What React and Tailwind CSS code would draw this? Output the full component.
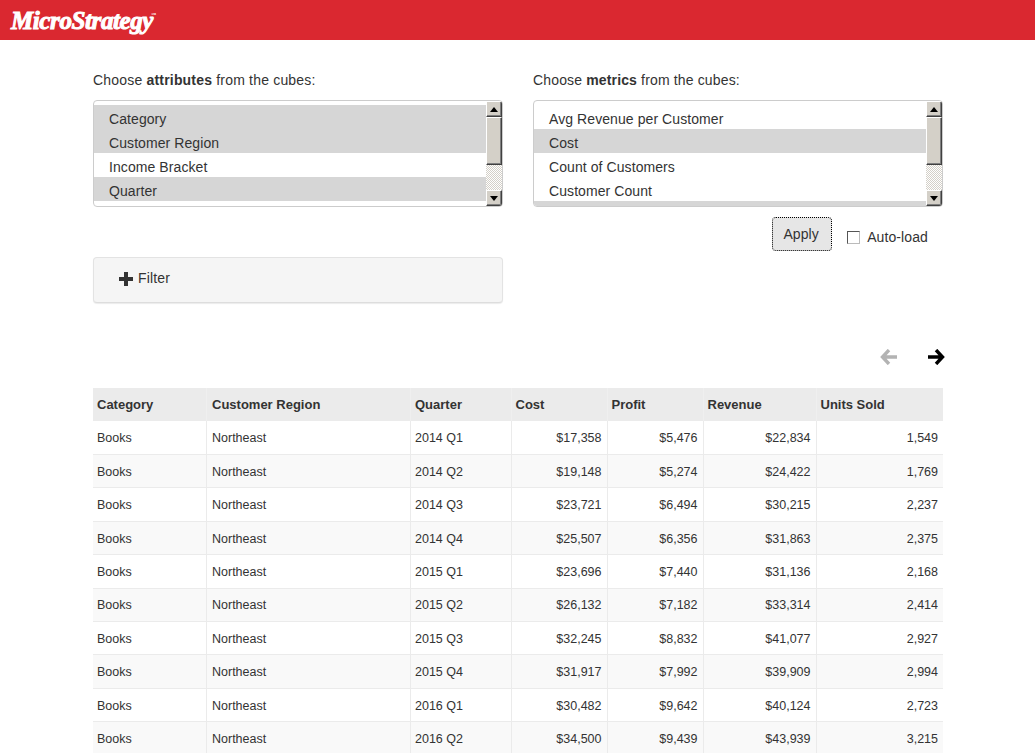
const attrs = [["Category", true], ["Customer Region", true], ["Income Bracket", false], ["Quarter", true]];
const metrics = [["Avg Revenue per Customer", false], ["Cost", true], ["Count of Customers", false], ["Customer Count", false]];
const rows = [
  ["2014 Q1", "$17,358", "$5,476", "$22,834", "1,549"],
  ["2014 Q2", "$19,148", "$5,274", "$24,422", "1,769"],
  ["2014 Q3", "$23,721", "$6,494", "$30,215", "2,237"],
  ["2014 Q4", "$25,507", "$6,356", "$31,863", "2,375"],
  ["2015 Q1", "$23,696", "$7,440", "$31,136", "2,168"],
  ["2015 Q2", "$26,132", "$7,182", "$33,314", "2,414"],
  ["2015 Q3", "$32,245", "$8,832", "$41,077", "2,927"],
  ["2015 Q4", "$31,917", "$7,992", "$39,909", "2,994"],
  ["2016 Q1", "$30,482", "$9,642", "$40,124", "2,723"],
  ["2016 Q2", "$34,500", "$9,439", "$43,939", "3,215"],
];
const headers = ["Category", "Customer Region", "Quarter", "Cost", "Profit", "Revenue", "Units Sold"];

function Bevel({ className, children }) {
  return (
    <div className={"flex items-center justify-center bg-[#d4d0c8] border border-t-white border-l-white border-r-[#404040] border-b-[#404040] shadow-[inset_-1px_-1px_0_#808080] " + className}>
      {children}
    </div>
  );
}

function Scrollbar() {
  return (
    <div className="w-[16px] h-full flex flex-col shrink-0">
      <Bevel className="h-[16px]">
        <svg width="8" height="5" viewBox="0 0 8 5"><path d="M4 0 L8 5 H0 Z" fill="#000" /></svg>
      </Bevel>
      <Bevel className="h-[48px]" />
      <div className="flex-1 bg-[repeating-conic-gradient(#d4d0c8_0_25%,#ffffff_0_50%)] bg-[length:2px_2px]" />
      <Bevel className="h-[16px]">
        <svg width="8" height="5" viewBox="0 0 8 5"><path d="M4 5 L8 0 H0 Z" fill="#000" /></svg>
      </Bevel>
    </div>
  );
}

function ListBox({ items, bottomGrey }) {
  return (
    <div className="h-[107px] border border-[#cccccc] rounded-[4px] flex overflow-hidden bg-white">
      <div className="flex-1 pt-[4px] flex flex-col">
        {items.map(([t, sel]) => (
          <div key={t} className={"h-[24px] shrink-0 pl-[15px] leading-[28px] text-[14px] tracking-[0.08px] text-[#333333] " + (sel ? "bg-[#d6d6d6]" : "")}>{t}</div>
        ))}
        {bottomGrey && <div className="flex-1 bg-[#d6d6d6]" />}
      </div>
      <Scrollbar />
    </div>
  );
}

function Arrow({ color, flip }) {
  return (
    <svg width="18" height="16" viewBox="0 0 18 16" className={flip ? "-scale-x-100" : ""}>
      <path d="M9 1 L15.5 8 L9 15 M14.5 8 H1" fill="none" stroke={color} strokeWidth="3.4" />
    </svg>
  );
}

export default function App() {
  return (
    <div className="h-screen overflow-hidden bg-white text-[#333333] font-['Liberation_Sans',Arial,sans-serif]">
      <header className="h-[40px] bg-[#da2830] pl-[11px] flex items-center">
        <span className="relative text-white text-[25px] font-bold italic tracking-[-0.4px] leading-none font-['Liberation_Serif',serif] [-webkit-text-stroke:1px_white]">
          MicroStrategy
          <span className="absolute -right-[3px] top-[4px] text-[5px] not-italic tracking-normal [-webkit-text-stroke:0]">™</span>
        </span>
      </header>

      <main className="w-[850px] ml-[93px]">
        <div className="flex gap-[30px] pt-[32px]">
          <section className="w-[410px]">
            <p className="h-[28px] text-[14px] leading-[17px] tracking-[0.19px]">Choose <b>attributes</b> from the cubes:</p>
            <ListBox items={attrs} />
          </section>
          <section className="w-[410px]">
            <p className="h-[28px] text-[14px] leading-[17px] tracking-[0.15px]">Choose <b>metrics</b> from the cubes:</p>
            <ListBox items={metrics} bottomGrey />
          </section>
        </div>

        <div className="flex gap-[30px]">
          <div className="w-[410px] pt-[50px]">
            <div className="h-[46px] bg-[#f5f5f5] border border-[#e3e3e3] border-b-[#dddddd] rounded-[4px] shadow-[0_1px_1px_rgba(0,0,0,0.08)] flex items-center pl-[25px] gap-[5px] text-[14px] pb-[3px]">
              <svg width="14" height="14" viewBox="0 0 14 14"><path d="M5 0 H9 V5 H14 V9 H9 V14 H5 V9 H0 V5 H5 Z" fill="#333333" /></svg>
              <span className="tracking-[0.15px]">Filter</span>
            </div>
          </div>
          <div className="w-[410px] pt-[10px] flex justify-end items-start">
            <button className="w-[60px] h-[34px] bg-[#e6e6e6] border border-dotted border-black rounded-[4px] text-[14px] leading-[32px] tracking-[0.1px] text-[#333333] pr-[2px]">Apply</button>
            <label className="flex items-center ml-[15px] mr-[15px] mt-[14px] h-[12px] text-[14px]">
              <span className="w-[13px] h-[13px] bg-white border border-t-[#555555] border-l-[#555555] border-r-[#bbbbbb] border-b-[#bbbbbb]" />
              <span className="ml-[7px] tracking-[0.1px]">Auto-load</span>
            </label>
          </div>
        </div>

        <div className="flex justify-end gap-[29px] h-[85px] pt-[46px] -mr-[2px]">
          <Arrow color="#b3b3b3" flip />
          <Arrow color="#000000" />
        </div>

        <table className="w-[850px] table-fixed border-collapse text-[12.5px]">
          <colgroup>
            <col className="w-[113.5px]" />
            <col className="w-[204px]" />
            <col className="w-[100.5px]" />
            <col className="w-[96px]" />
            <col className="w-[96px]" />
            <col className="w-[113px]" />
            <col className="w-[127px]" />
          </colgroup>
          <thead>
            <tr className="h-[33px] bg-[#ebebeb]">
              {headers.map((h) => (
                <th key={h} className="text-left font-bold text-[13px] pl-[4px] pr-[4px] py-0 border-l border-[#efefef] first:border-l-0 [&:nth-child(2)]:pl-[5px]">{h}</th>
              ))}
            </tr>
          </thead>
          <tbody>
            {rows.map((r, i) => (
              <tr key={r[0]} className={"h-[33.43px] border-b border-[#ebebeb] " + (i % 2 ? "bg-[#f9f9f9]" : "bg-white")}>
                <td className="pl-[4px] pt-[2px] pb-0">Books</td>
                <td className="pl-[5px] pt-[2px] pb-0 border-l border-[#ebebeb]">Northeast</td>
                <td className="pl-[4px] pt-[2px] pb-0 border-l border-[#ebebeb]">{r[0]}</td>
                {r.slice(1).map((v) => (
                  <td key={v} className="text-right pr-[5px] pt-[2px] pb-0 border-l border-[#ebebeb]">{v}</td>
                ))}
              </tr>
            ))}
          </tbody>
        </table>
      </main>
    </div>
  );
}
